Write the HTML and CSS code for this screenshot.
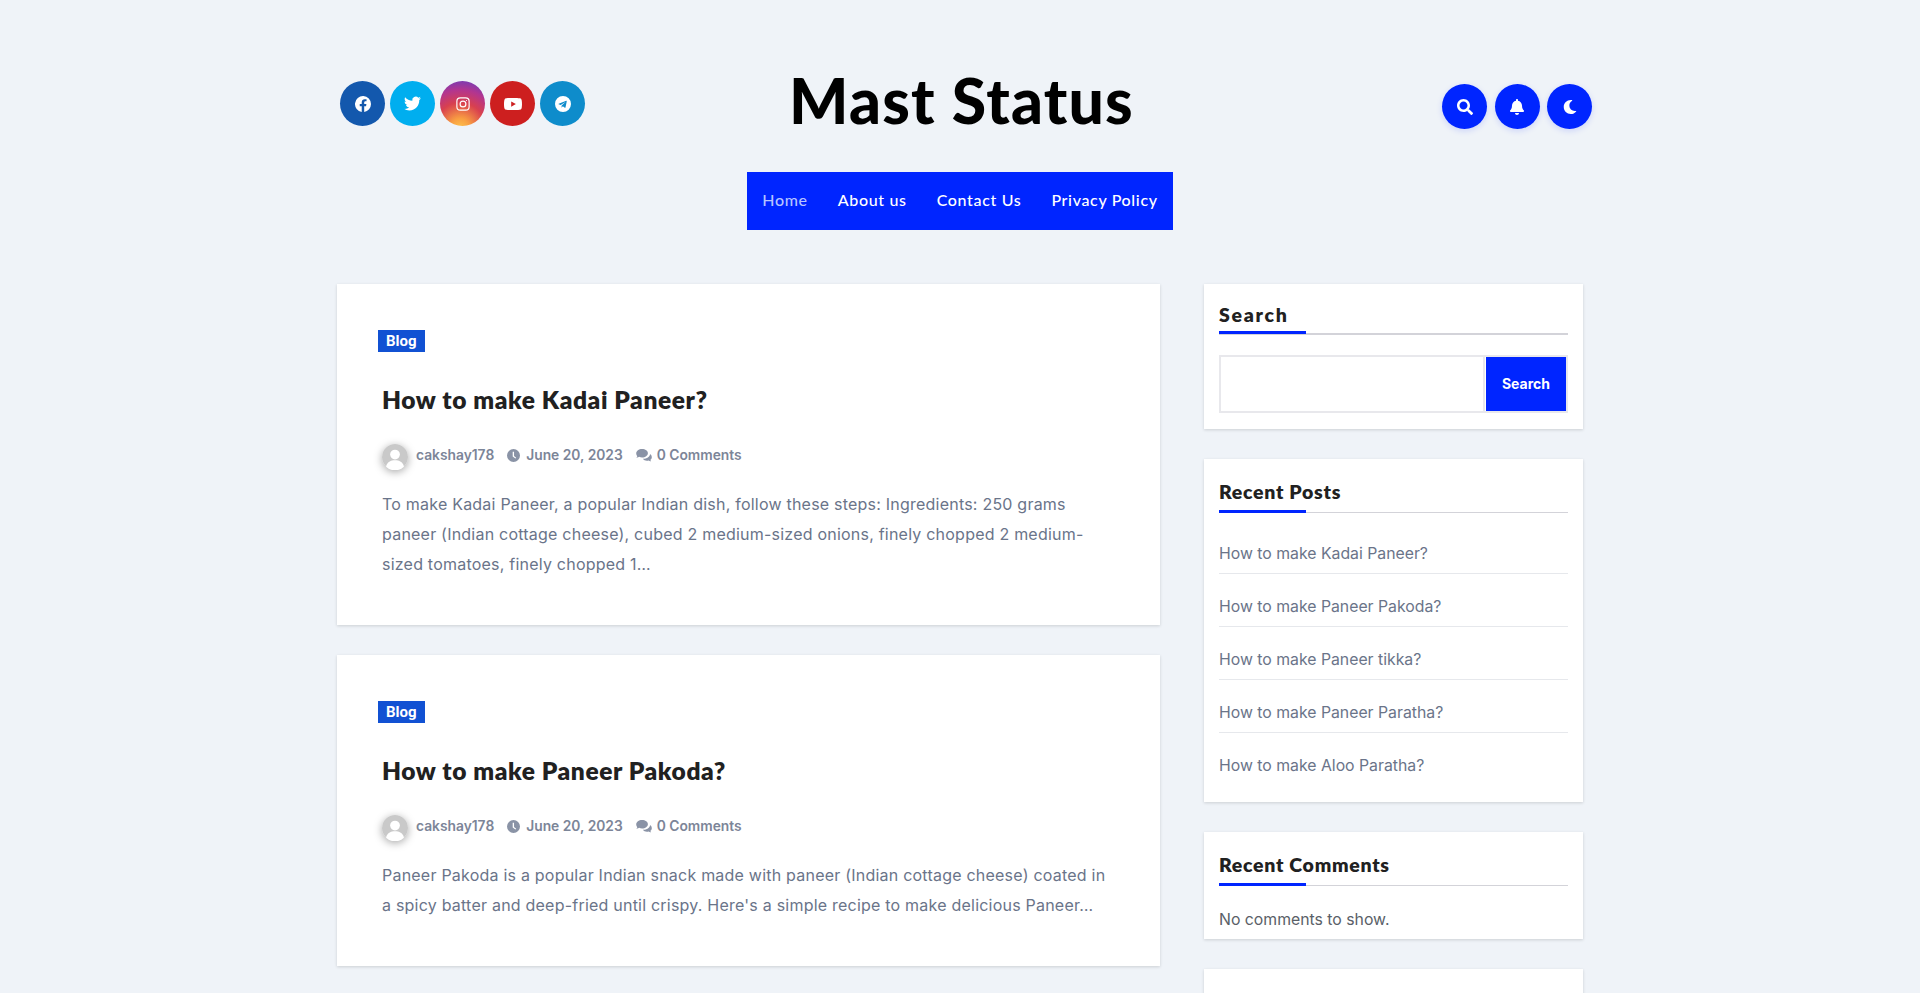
FILE: index.html
```html
<!DOCTYPE html>
<html lang="en">
<head>
<meta charset="utf-8">
<title>Mast Status</title>
<link rel="stylesheet" href="styles.css">
</head>
<body>
<div class="page">
  <header class="masthead">
    <div class="socials">
      <a class="soc fb"><svg viewBox="0 0 24 24" width="16" height="16"><path fill="#fff" d="M24 12a12 12 0 1 0-13.9 11.9v-8.4H7.1V12h3V9.400c0-3 1.800-4.700 4.500-4.700 1.300 0 2.700.2 2.700.2v3h-1.500c-1.500 0-2 .9-2 1.900V12h3.300l-.5 3.500h-2.800v8.400A12 12 0 0 0 24 12z"/></svg></a>
      <a class="soc tw"><svg viewBox="0 0 24 24" width="17" height="17"><path fill="#fff" d="M23.950 4.570a10 10 0 0 1-2.820.77 4.960 4.960 0 0 0 2.160-2.720c-.95.550-2 .96-3.130 1.190a4.920 4.920 0 0 0-8.380 4.480C7.690 8.090 4.070 6.130 1.640 3.160a4.820 4.820 0 0 0-.67 2.480c0 1.710.87 3.210 2.190 4.100a4.900 4.900 0 0 1-2.230-.62v.06a4.920 4.920 0 0 0 3.950 4.830 4.940 4.940 0 0 1-2.210.08 4.940 4.940 0 0 0 4.600 3.420A9.870 9.870 0 0 1 0 19.540a14 14 0 0 0 7.560 2.210c9.050 0 14-7.500 14-13.980 0-.21 0-.42-.02-.63a9.940 9.940 0 0 0 2.410-2.570z"/></svg></a>
      <a class="soc ig"><svg viewBox="0 0 24 24" width="14" height="14" fill="none" stroke="#fff" stroke-width="2"><rect x="1.500" y="1.500" width="21" height="21" rx="6"/><circle cx="12" cy="12" r="5"/><circle cx="18" cy="6" r="1" fill="#fff" stroke="none"/></svg></a>
      <a class="soc yt"><svg viewBox="0 0 24 24" width="18" height="18"><path fill="#fff" d="M23.500 6.500a3 3 0 0 0-2.100-2.100C19.500 3.900 12 3.900 12 3.900s-7.500 0-9.400.5A3 3 0 0 0 .5 6.500C0 8.400 0 12 0 12s0 3.600.5 5.500a3 3 0 0 0 2.100 2.100c1.900.5 9.400.5 9.400.5s7.500 0 9.400-.5a3 3 0 0 0 2.100-2.100c.5-1.900.5-5.500.5-5.500s0-3.600-.5-5.500zM9.600 15.500v-7l6.200 3.500z"/></svg></a>
      <a class="soc tg"><svg viewBox="0 0 24 24" width="16" height="16"><path fill="#fff" d="M12 0a12 12 0 1 0 0 24 12 12 0 0 0 0-24zm5.600 8.200-1.900 8.900c-.1.600-.5.800-1 .5l-2.900-2.100-1.400 1.300c-.2.200-.3.300-.6.300l.2-2.900 5.400-4.900c.2-.2 0-.3-.3-.1l-6.700 4.200-2.900-.9c-.6-.2-.6-.6.1-.9l11.200-4.300c.5-.2 1 .1.700.9z"/></svg></a>
    </div>
    <h1 class="brand">Mast Status</h1>
    <div class="tools">
      <a class="tool"><svg viewBox="0 0 512 512" width="16" height="16"><path fill="#fff" d="M505 442.700 405.300 343c-4.500-4.500-10.600-7-17-7H372c27.600-35.300 44-79.700 44-128C416 93.100 322.900 0 208 0S0 93.100 0 208s93.100 208 208 208c48.300 0 92.700-16.400 128-44v16.300c0 6.400 2.500 12.500 7 17l99.700 99.700c9.400 9.400 24.600 9.400 33.900 0l28.300-28.300c9.400-9.400 9.400-24.600.1-34zM208 336c-70.700 0-128-57.200-128-128 0-70.700 57.200-128 128-128 70.700 0 128 57.200 128 128 0 70.700-57.200 128-128 128z"/></svg></a>
      <a class="tool"><svg viewBox="0 0 448 512" width="14" height="16"><path fill="#fff" d="M224 512c35.300 0 64-28.700 64-64H160c0 35.300 28.700 64 64 64zm215.400-149.700c-19.300-20.800-55.500-52-55.500-154.300 0-77.700-54.500-139.900-127.900-155.200V32c0-17.700-14.300-32-32-32s-32 14.300-32 32v20.800C118.600 68.100 64.100 130.300 64.100 208c0 102.300-36.200 133.500-55.500 154.300-6 6.400-8.700 14.100-8.600 21.700.1 16.400 13 32 32.100 32h383.800c19.100 0 32-15.600 32.100-32 .1-7.600-2.600-15.300-8.600-21.700z"/></svg></a>
      <a class="tool"><svg viewBox="0 0 512 512" width="14" height="14"><path fill="#fff" d="M283.200 512c79 0 151.100-35.900 198.900-94.800 7.100-8.700-.6-21.400-11.600-19.300-124.200 23.700-238.300-71.600-238.300-197 0-72.200 38.700-138.700 101.500-174.400 9.700-5.500 7.300-20.200-3.700-22.200A258.200 258.200 0 0 0 283.200 0c-141.300 0-256 114.500-256 256 0 141.300 114.500 256 256 256z"/></svg></a>
    </div>
  </header>
  <nav class="navwrap">
    <ul class="nav">
      <li class="active">Home</li>
      <li>About us</li>
      <li>Contact Us</li>
      <li>Privacy Policy</li>
    </ul>
  </nav>
  <div class="layout">
    <main class="posts">
      <article class="card">
        <span class="tag">Blog</span>
        <h2 class="post-title">How to make Kadai Paneer?</h2>
        <div class="meta">
          <span class="avatar"><svg viewBox="0 0 32 32" width="26" height="26"><circle cx="16" cy="16" r="16" fill="#c9c9c9"/><circle cx="16" cy="13" r="6" fill="#fff"/><path fill="#fff" d="M5 28c1-6 6-8 11-8s10 2 11 8a16 16 0 0 1-22 0z"/></svg></span>
          <span class="m-item author">cakshay178</span>
          <span class="m-item"><svg class="m-icon" viewBox="0 0 24 24" width="13" height="13"><path fill="#8a93a6" d="M12 0a12 12 0 1 0 0 24 12 12 0 0 0 0-24zm5 16-1.500 1.700L10.500 14V5h2.500v7.800z"/></svg>June 20, 2023</span>
          <span class="m-item"><svg class="m-icon wide" viewBox="0 0 24 20" width="16" height="13"><path fill="#8a93a6" d="M9 0C4 0 0 3 0 7c0 1.600.7 3 1.700 4.200-.4 1.300-1.500 2.300-1.500 2.300s2.600 0 4.300-1.500C5.900 12.600 7.400 13 9 13c5 0 9-2.900 9-6.500S14 0 9 0zm15 12.500c0-2-1-3.600-2.600-4.800-.5 4.300-5 7.300-10.400 7.300h-.9c1.400 1.800 3.800 3 6.400 3 1 0 1.900-.2 2.800-.5 1.500 1 3.700 1.500 3.700 1.500s-1-1-1.300-2.300c1.600-.9 2.300-2.400 2.300-4.200z"/></svg>0 Comments</span>
        </div>
        <p class="excerpt">To make Kadai Paneer, a popular Indian dish, follow these steps: Ingredients: 250 grams paneer (Indian cottage cheese), cubed 2 medium-sized onions, finely chopped 2 medium-sized tomatoes, finely chopped 1…</p>
      </article>
      <article class="card">
        <span class="tag">Blog</span>
        <h2 class="post-title">How to make Paneer Pakoda?</h2>
        <div class="meta">
          <span class="avatar"><svg viewBox="0 0 32 32" width="26" height="26"><circle cx="16" cy="16" r="16" fill="#c9c9c9"/><circle cx="16" cy="13" r="6" fill="#fff"/><path fill="#fff" d="M5 28c1-6 6-8 11-8s10 2 11 8a16 16 0 0 1-22 0z"/></svg></span>
          <span class="m-item author">cakshay178</span>
          <span class="m-item"><svg class="m-icon" viewBox="0 0 24 24" width="13" height="13"><path fill="#8a93a6" d="M12 0a12 12 0 1 0 0 24 12 12 0 0 0 0-24zm5 16-1.500 1.700L10.500 14V5h2.500v7.800z"/></svg>June 20, 2023</span>
          <span class="m-item"><svg class="m-icon wide" viewBox="0 0 24 20" width="16" height="13"><path fill="#8a93a6" d="M9 0C4 0 0 3 0 7c0 1.600.7 3 1.700 4.200-.4 1.300-1.500 2.300-1.500 2.300s2.600 0 4.300-1.500C5.900 12.600 7.400 13 9 13c5 0 9-2.900 9-6.500S14 0 9 0zm15 12.500c0-2-1-3.600-2.600-4.800-.5 4.300-5 7.300-10.400 7.300h-.9c1.400 1.800 3.800 3 6.400 3 1 0 1.900-.2 2.800-.5 1.500 1 3.700 1.500 3.700 1.500s-1-1-1.300-2.300c1.600-.9 2.300-2.400 2.300-4.200z"/></svg>0 Comments</span>
        </div>
        <p class="excerpt">Paneer Pakoda is a popular Indian snack made with paneer (Indian cottage cheese) coated in a spicy batter and deep-fried until crispy. Here's a simple recipe to make delicious Paneer…</p>
      </article>
    </main>
    <aside class="sidebar">
      <section class="widget">
        <h3 class="w-title search-title"><span>Search</span></h3>
        <form class="search">
          <input class="search-input" type="text" aria-label="Search">
          <button class="search-btn" type="button">Search</button>
        </form>
      </section>
      <section class="widget">
        <h3 class="w-title"><span>Recent Posts</span></h3>
        <ul class="recent">
          <li>How to make Kadai Paneer?</li>
          <li>How to make Paneer Pakoda?</li>
          <li>How to make Paneer tikka?</li>
          <li>How to make Paneer Paratha?</li>
          <li>How to make Aloo Paratha?</li>
        </ul>
      </section>
      <section class="widget compact">
        <h3 class="w-title"><span>Recent Comments</span></h3>
        <p class="none">No comments to show.</p>
      </section>
      <section class="widget">
        <h3 class="w-title"><span>Archives</span></h3>
      </section>
    </aside>
  </div>
</div>
</body>
</html>
```
FILE: styles.css
```css
* { box-sizing: border-box; }
html, body { margin: 0; padding: 0; }
body {
  background: #eff3f8;
  font-family: Inter, "Liberation Sans", sans-serif;
  color: #606a80;
}
.page { width: 1260px; margin: 0 auto; padding: 0 0 0 7px; }
.masthead {
  display: grid;
  grid-template-columns: 1fr auto 1fr;
  align-items: flex-start;
  padding-top: 70px;
  height: 172px;
}
.socials { display: flex; gap: 5px; padding-top: 11px; padding-left: 3px; }
.soc {
  width: 45px; height: 45px; border-radius: 50%;
  display: flex; align-items: center; justify-content: center;
}
.fb { background: #1358ad; }
.tw { background: #00aeef; }
.ig { background: radial-gradient(circle at 45% 105%, #fdc34d 0%, #f99f42 18%, #d8404f 48%, #b3358f 72%, #5c3fc4 100%); }
.yt { background: #cd1f1f; }
.tg { background: #0e8ccb; }
.brand {
  margin: 0;
  font-family: Lato, sans-serif;
  font-weight: 900;
  font-size: 62.5px;
  line-height: 60px;
  letter-spacing: 1.2px;
  color: #000;
  transform: translateX(-2px);
}
.tools { display: flex; gap: 7.5px; justify-content: flex-end; padding-top: 14px; transform: translateX(2px); }
.tool {
  width: 45px; height: 45px; border-radius: 50%;
  background: #0025ff;
  box-shadow: 0 2px 6px rgba(0, 37, 255, .15);
  display: flex; align-items: center; justify-content: center;
}
.navwrap { display: flex; justify-content: center; padding-right: 7px; }
.nav {
  list-style: none; margin: 0; padding: 0 15px 3px;
  background: #0025ff;
  height: 58px;
  display: flex; align-items: center; gap: 30px;
  font-family: Lato, sans-serif;
  font-size: 16px;
  font-weight: 500;
  letter-spacing: .66px;
  color: #fff;
}
.nav .active { color: #b7c4ff; }
.layout { display: flex; gap: 44px; align-items: flex-start; padding-top: 54px; }
.posts { width: 823px; flex: none; display: flex; flex-direction: column; gap: 30px; }
.card {
  background: #fff;
  box-shadow: 0 1px 3px rgba(0, 0, 0, .15);
  padding: 46px 45px 46px;
}
.tag {
  display: block; width: max-content;
  margin-left: -4px;
  background: #1151d3;
  color: #fff;
  font-family: Roboto, sans-serif;
  font-weight: 700; font-size: 15px; line-height: 22px;
  padding: 0 8px;
}
.post-title {
  margin: 30px 0 0;
  font-family: Lato, sans-serif;
  font-weight: 800;
  font-size: 24.5px;
  line-height: 36px;
  letter-spacing: .6px;
  color: #212121;
}
.meta {
  display: flex; align-items: center;
  margin-top: 21px;
  height: 32px;
  font-size: 13.8px; font-weight: 600;
  color: #7c8598;
}
.avatar {
  width: 26px; height: 26px; border-radius: 50%;
  box-shadow: 0 2px 8px rgba(0, 0, 0, .35);
  margin-right: 8px;
  display: block;
  transform: translateY(2px);
}
.avatar svg { display: block; }
.m-item { display: inline-flex; align-items: center; margin-right: 13px; white-space: nowrap; }
.m-icon { margin-right: 6px; }
.m-icon.wide { margin-right: 5px; }
.excerpt {
  margin: 18px 0 0;
  font-size: 16px;
  letter-spacing: .22px;
  line-height: 30px;
  color: #6a7489;
}
.sidebar { width: 379px; flex: none; display: flex; flex-direction: column; gap: 30px; }
.widget {
  background: #fff;
  box-shadow: 0 1px 3px rgba(0, 0, 0, .15);
  padding: 20px 15px 16px;
}
.w-title {
  margin: 0;
  font-family: Lato, sans-serif;
  font-weight: 800;
  font-size: 19.5px;
  line-height: 26px;
  letter-spacing: .7px;
  color: #212121;
  border-bottom: 1px solid #d3d3d9;
  padding-bottom: 7px;
  position: relative;
}
.search-title { margin-top: -2px; padding-bottom: 5px; border-bottom-width: 2px; letter-spacing: 1.7px; }
.w-title span::after {
  content: "";
  position: absolute; left: 0; bottom: -1px;
  width: 87px; height: 3px;
  background: #0025ff;
}
.search { display: flex; margin-top: 20px; border: 2px solid #e8e8ec; height: 58px; }
.search-input { flex: 1; min-width: 0; border: 0; border-right: 2px solid #e8e8ec; background: #fff; outline: 0; }
.search-btn {
  width: 80px; margin-left: 1px; border: 0; padding-bottom: 2px;
  background: #0025ff; color: #fff;
  font-family: Inter, sans-serif; font-weight: 700; font-size: 14px;
}
.recent { list-style: none; margin: 0; padding: 8px 0 0; }
.recent li {
  height: 53px; padding-top: 21px;
  font-size: 15.8px; line-height: 24px;
  color: #6a7489;
  border-bottom: 1px solid #e6e8ec;
}
.recent li:last-child { border-bottom: 0; }
.none { margin: 0; padding-top: 23px; font-size: 15.8px; line-height: 22px; color: #5a5f68; }
.compact { padding-bottom: 8px; }
```
